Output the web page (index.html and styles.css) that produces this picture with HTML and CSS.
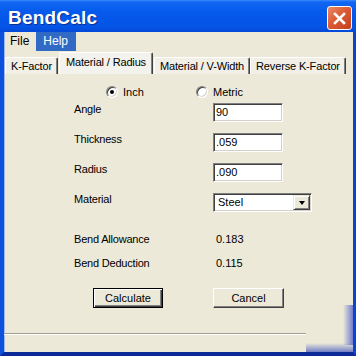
FILE: index.html
```html
<!DOCTYPE html>
<html lang="en">
  <head>
    <meta charset="UTF-8" />
    <title>BendCalc</title>
    <link rel="stylesheet" href="styles.css">
  </head>
  <body>
    <div class="window">
      <div class="titlebar">
        <span class="title">BendCalc</span>
        <button class="close-btn" title="Close">
          <svg width="13" height="13" viewBox="0 0 13 13">
            <path d="M2 2 L11 11 M11 2 L2 11" stroke="#fff" stroke-width="2.6" stroke-linecap="square" />
          </svg>
        </button>
      </div>

      <div class="frame">
        <div class="menubar">
          <span class="menu-item">File</span>
          <span class="menu-item active">Help</span>
        </div>

        <div class="tabs">
          <span class="tab">K-Factor</span>
          <span class="tab selected">Material / Radius</span>
          <span class="tab">Material / V-Width</span>
          <span class="tab">Reverse K-Factor</span>
        </div>

        <div class="panel">
          <div class="units">
            <label class="radio"><span class="dot checked"></span>Inch</label>
            <label class="radio"><span class="dot"></span>Metric</label>
          </div>

          <div class="form">
            <span class="label">Angle</span>
            <input class="field" type="text" value="90" />

            <span class="label">Thickness</span>
            <input class="field" type="text" value=".059" />

            <span class="label">Radius</span>
            <input class="field" type="text" value=".090" />

            <span class="label">Material</span>
            <div class="combo">
              <span class="combo-text">Steel</span>
              <span class="combo-btn"><span class="arrow"></span></span>
            </div>
          </div>

          <div class="results">
            <span class="label">Bend Allowance</span>
            <span class="value">0.183</span>
            <span class="label">Bend Deduction</span>
            <span class="value">0.115</span>
          </div>

          <div class="actions">
            <button class="button default">Calculate</button>
            <button class="button">Cancel</button>
          </div>
        </div>

        <div class="statusbar"></div>
        <div class="grip"></div>
      </div>
    </div>
  </body>
</html>
```

FILE: styles.css
```css
body {
  margin: 0;
  padding: 0;
  font-family: "Liberation Sans", Arial, sans-serif;
  font-size: 11px;
  color: #000;
  background-color: #ece9d8;
}
.window {
  width: 356px;
  height: 356px;
  display: flex;
  flex-direction: column;
  overflow: hidden;
}

/* title bar */
.titlebar {
  height: 32px;
  flex: none;
  display: flex;
  align-items: flex-start;
  justify-content: space-between;
  background: linear-gradient(#3b8cff 0, #1167f2 2px, #0559eb 40%, #0454e6 85%, #0349d6 100%);
}
.title {
  margin: 8px 0 0 8px;
  font-size: 19px;
  line-height: 20px;
  font-weight: bold;
  letter-spacing: 0.2px;
  color: #fff;
  text-shadow: 1px 1px 0 #0a2f8c;
}
.close-btn {
  margin: 6px 4px 0 0;
  width: 25px;
  height: 24px;
  padding: 0;
  display: flex;
  align-items: center;
  justify-content: center;
  border: 1px solid #fff;
  border-radius: 3px;
  background: linear-gradient(135deg, #eb8a68 0, #dc5b34 45%, #c2401c 100%);
}

/* frame around the client area */
.frame {
  flex: 1;
  position: relative;
  display: flex;
  flex-direction: column;
  border-left: 4px solid #0d50dc;
  border-right: 3px solid #0a44d0;
  border-bottom: 4px solid #0b2a98;
  box-shadow: inset 1px 0 0 #9cb8f0;
}

.menubar {
  height: 19px;
  display: flex;
  font-size: 12px;
  line-height: 19px;
}
.menu-item {
  padding: 0 7px 0 6px;
}
.menu-item.active {
  background-color: #316ac5;
  color: #fff;
  padding: 0 8px 0 7px;
}

/* tabs */
.tabs {
  height: 23px;
  display: flex;
  align-items: flex-end;
  padding-left: 1px;
  white-space: nowrap;
  letter-spacing: -0.15px;
}
.tab {
  flex: none;
  height: 17px;
  box-sizing: border-box;
  padding: 2px 5px 0 5px;
  line-height: 13px;
  background-color: #f1efe6;
  border-top: 1px solid #fff;
  border-left: 1px solid #fff;
  border-right: 1px solid #404040;
  box-shadow: inset -1px 0 0 #808080;
  border-radius: 2px 2px 0 0;
}
.tab.selected {
  height: 22px;
  padding: 3px 6px 0 6px;
  margin: 0 1px 0 1px;
  background-color: #f3f2ec;
}

/* client panel */
.panel {
  flex: 1;
  padding-left: 70px;
}
.units {
  display: flex;
  margin-top: 12px;
  padding-left: 32px;
  height: 12px;
  line-height: 12px;
}
.radio {
  width: 90px;
  display: flex;
  align-items: center;
  gap: 5px;
}
.dot {
  width: 12px;
  height: 12px;
  box-sizing: border-box;
  border-radius: 50%;
  background-color: #fff;
  border: 1px solid;
  border-color: #808080 #fff #fff #808080;
  box-shadow: inset 1px 1px 0 #404040, inset -1px -1px 0 #d4d0c8;
  display: flex;
  align-items: center;
  justify-content: center;
}
.dot.checked::after {
  content: "";
  width: 4px;
  height: 4px;
  border-radius: 50%;
  background-color: #000;
}

.form {
  display: grid;
  grid-template-columns: 139px auto;
  grid-auto-rows: 19px;
  row-gap: 11px;
  margin-top: 5px;
  justify-items: start;
}
.label {
  line-height: 13px;
  letter-spacing: -0.2px;
}
.field {
  width: 70px;
  height: 19px;
  box-sizing: border-box;
  margin: 0;
  padding: 0 2px 2px 2px;
  font-family: inherit;
  font-size: 11px;
  background-color: #fff;
  border: 1px solid;
  border-color: #7f7f7f #fff #fff #7f7f7f;
  box-shadow: inset 1px 1px 0 #404040, inset -1px -1px 0 #d4d0c8;
  outline: none;
}
.combo {
  width: 99px;
  height: 19px;
  box-sizing: border-box;
  display: flex;
  align-items: stretch;
  background-color: #fff;
  border: 1px solid;
  border-color: #7f7f7f #fff #fff #7f7f7f;
  box-shadow: inset 1px 1px 0 #404040, inset -1px -1px 0 #d4d0c8;
  padding: 1px;
}
.combo-text {
  flex: 1;
  padding: 1px 0 0 3px;
  line-height: 13px;
}
.combo-btn {
  width: 17px;
  box-sizing: border-box;
  display: flex;
  align-items: center;
  justify-content: center;
  background-color: #ece9d8;
  border: 1px solid;
  border-color: #ece9d8 #404040 #404040 #ece9d8;
  box-shadow: inset 1px 1px 0 #fff, inset -1px -1px 0 #808080;
}
.arrow {
  width: 0;
  height: 0;
  border-left: 3.5px solid transparent;
  border-right: 3.5px solid transparent;
  border-top: 4px solid #000;
}

.results {
  display: grid;
  grid-template-columns: 142px auto;
  grid-auto-rows: 13px;
  row-gap: 11px;
  margin-top: 21px;
}
.value {
  line-height: 13px;
}

.actions {
  display: flex;
  gap: 50px;
  margin-top: 18px;
  padding-left: 19px;
}
.button {
  width: 71px;
  height: 20px;
  box-sizing: border-box;
  margin: 0;
  padding: 0;
  font-family: inherit;
  font-size: 11px;
  color: #000;
  background-color: #ece9d8;
  border: 1px solid;
  border-color: #fff #404040 #404040 #fff;
  box-shadow: inset -1px -1px 0 #808080;
}
.button.default {
  width: 70px;
  border-color: #000;
  box-shadow: inset 1px 1px 0 #fff, inset -1px -1px 0 #404040, inset -2px -2px 0 #808080;
}

.statusbar {
  height: 18px;
  margin-right: 47px;
  border-top: 1px solid #a39f92;
  box-shadow: inset 0 1px 0 #fff;
}
.grip {
  position: absolute;
  right: 0;
  bottom: 0;
  width: 47px;
  height: 47px;
  background:
    linear-gradient(to right, rgba(80, 96, 200, 0) 0, rgba(70, 90, 200, 0.75) 100%) right top / 10px 40px no-repeat,
    linear-gradient(to bottom, rgba(80, 96, 200, 0) 0, rgba(60, 80, 190, 0.7) 100%) left bottom / 100% 9px no-repeat;
}
```
